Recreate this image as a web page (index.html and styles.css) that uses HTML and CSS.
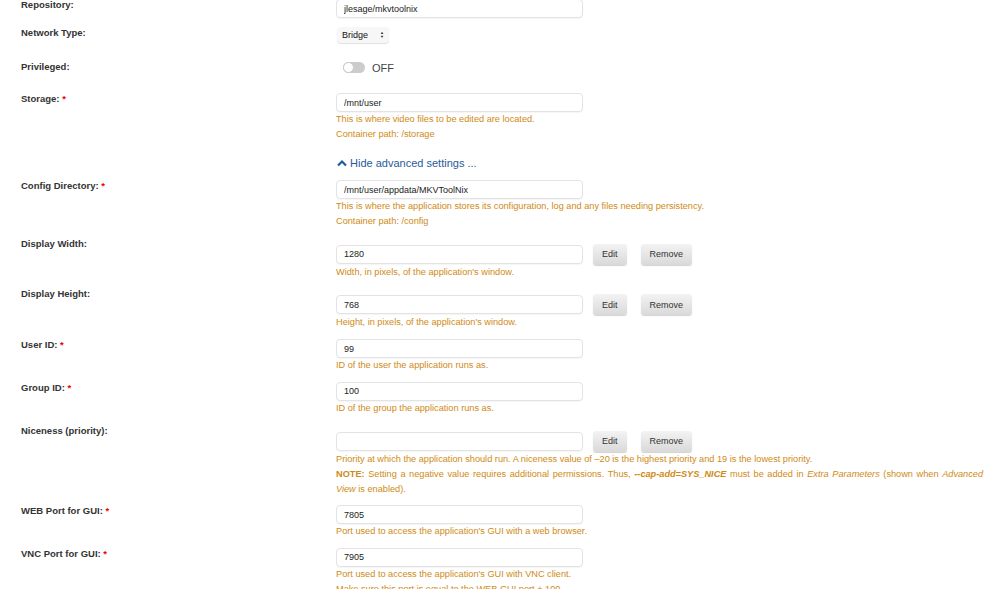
FILE: index.html
```html
<!DOCTYPE html>
<html lang="en">
<head>
  <meta charset="UTF-8" />
  <title>Update Container</title>
  <link rel="stylesheet" href="styles.css">
</head>
<body>

<form class="settings" onsubmit="return false;">

  <div class="row">
    <label>Repository:</label>
    <div class="field">
      <input type="text" value="jlesage/mkvtoolnix" />
    </div>
  </div>

  <div class="row">
    <label>Network Type:</label>
    <div class="field">
      <div class="select">Bridge <span class="arrows">&#9650;<br>&#9660;</span></div>
    </div>
  </div>

  <div class="row switch-row">
    <label>Privileged:</label>
    <div class="field">
      <span class="switch"><span class="knob"></span></span>
      <span class="switch-text">OFF</span>
    </div>
  </div>

  <div class="row">
    <label>Storage: <span class="req">*</span></label>
    <div class="field">
      <input type="text" value="/mnt/user" />
      <div class="help">This is where video files to be edited are located.<br>Container path: /storage</div>
    </div>
  </div>

  <div class="toggle-adv">
    <a href="#">
      <svg width="10" height="8" viewBox="0 0 10 8"><path d="M1 6.5 L5 2.5 L9 6.5" fill="none" stroke="#1f5c99" stroke-width="2.2"/></svg>
      Hide advanced settings ...
    </a>
  </div>

  <div class="row">
    <label>Config Directory: <span class="req">*</span></label>
    <div class="field">
      <input type="text" value="/mnt/user/appdata/MKVToolNix" />
      <div class="help">This is where the application stores its configuration, log and any files needing persistency.<br>Container path: /config</div>
    </div>
  </div>

  <div class="row with-btns">
    <label>Display Width:</label>
    <div class="field">
      <div class="line">
        <input type="text" value="1280" />
        <button>Edit</button>
        <button class="remove">Remove</button>
      </div>
      <div class="help">Width, in pixels, of the application's window.</div>
    </div>
  </div>

  <div class="row with-btns">
    <label>Display Height:</label>
    <div class="field">
      <div class="line">
        <input type="text" value="768" />
        <button>Edit</button>
        <button class="remove">Remove</button>
      </div>
      <div class="help">Height, in pixels, of the application's window.</div>
    </div>
  </div>

  <div class="row">
    <label>User ID: <span class="req">*</span></label>
    <div class="field">
      <input type="text" value="99" />
      <div class="help">ID of the user the application runs as.</div>
    </div>
  </div>

  <div class="row">
    <label>Group ID: <span class="req">*</span></label>
    <div class="field">
      <input type="text" value="100" />
      <div class="help">ID of the group the application runs as.</div>
    </div>
  </div>

  <div class="row with-btns">
    <label>Niceness (priority):</label>
    <div class="field">
      <div class="line">
        <input type="text" value="" />
        <button>Edit</button>
        <button class="remove">Remove</button>
      </div>
      <div class="help justify">Priority at which the application should run. A niceness value of &ndash;20 is the highest priority and 19 is the lowest priority.<br><b>NOTE:</b> Setting a negative value requires additional permissions. Thus, <b><i>--cap-add=SYS_NICE</i></b> must be added in <i>Extra Parameters</i> (shown when <i>Advanced View</i> is enabled).</div>
    </div>
  </div>

  <div class="row">
    <label>WEB Port for GUI: <span class="req">*</span></label>
    <div class="field">
      <input type="text" value="7805" />
      <div class="help">Port used to access the application's GUI with a web browser.</div>
    </div>
  </div>

  <div class="row">
    <label>VNC Port for GUI: <span class="req">*</span></label>
    <div class="field">
      <input type="text" value="7905" />
      <div class="help">Port used to access the application's GUI with VNC client.<br>Make sure this port is equal to the WEB GUI port + 100.</div>
    </div>
  </div>

</form>

</body>
</html>
```

FILE: styles.css
```css
body {
  margin: 0;
  background-color: #fff;
  font-family: "Liberation Sans", Arial, sans-serif;
  color: #333;
  overflow: hidden;
}

.settings {
  margin-top: -1px;
  padding: 0 17px 0 21px;
}

.row {
  display: grid;
  grid-template-columns: 315px 1fr;
  margin-bottom: 8.7px;
}

.row label {
  font-size: 9.5px;
  font-weight: bold;
  line-height: 12px;
  color: #333;
}

.req {
  color: #e00;
}

.field input {
  display: block;
  box-sizing: border-box;
  width: 247px;
  height: 19px;
  padding: 0 7px;
  border: 1px solid #e3e3e3;
  border-radius: 4px;
  box-shadow: 0 1px 1px rgba(0, 0, 0, 0.04);
  font-family: inherit;
  font-size: 9px;
  color: #222;
  background: #fff;
}

.help {
  font-size: 9.2px;
  line-height: 15px;
  color: #cf8a14;
}

.help.justify {
  text-align: justify;
}

/* select box */
.select {
  box-sizing: border-box;
  width: 52px;
  height: 16px;
  margin-left: 1px;
  padding: 0 0 0 5px;
  border-radius: 4px;
  background: #f7f7f7;
  box-shadow: 0 1px 1px rgba(0, 0, 0, 0.12);
  font-size: 9px;
  line-height: 16px;
  color: #111;
  position: relative;
}

.select .arrows {
  position: absolute;
  right: 5px;
  top: 4px;
  font-size: 4px;
  line-height: 4px;
  color: #222;
}

/* on/off switch */
.switch-row {
  padding-top: 10px;
  margin-bottom: 19px;
}

.switch-row .field {
  display: flex;
  align-items: center;
  height: 13px;
}

.switch {
  display: inline-block;
  box-sizing: border-box;
  width: 22px;
  height: 11px;
  margin-left: 7px;
  border-radius: 6px;
  background: #ccc;
  position: relative;
}

.switch .knob {
  position: absolute;
  left: 0;
  top: 0;
  box-sizing: border-box;
  width: 11px;
  height: 11px;
  border-radius: 50%;
  background: #fff;
  border: 1px solid #c8c8c8;
}

.switch-text {
  margin-left: 7px;
  font-size: 11px;
  color: #444;
}

/* advanced toggle link */
.toggle-adv {
  padding-left: 315px;
  padding-top: 1px;
  margin-bottom: 7px;
  line-height: 20px;
}

.toggle-adv a {
  font-size: 11px;
  color: #1f5c99;
  text-decoration: none;
  padding-left: 1px;
}

/* rows with Edit / Remove */
.with-btns .field {
  padding-top: 6px;
}

.line {
  display: flex;
  align-items: center;
}

.line button {
  height: 21px;
  margin-left: 10px;
  padding: 0 9px;
  border: none;
  border-radius: 3px;
  background: linear-gradient(#f3f3f3, #d9d9d9);
  box-shadow: 0 1px 1px rgba(0, 0, 0, 0.18);
  font-family: inherit;
  font-size: 9px;
  color: #333;
  cursor: pointer;
}

.line button.remove {
  margin-left: 14px;
  padding: 0 9px;
}
```
